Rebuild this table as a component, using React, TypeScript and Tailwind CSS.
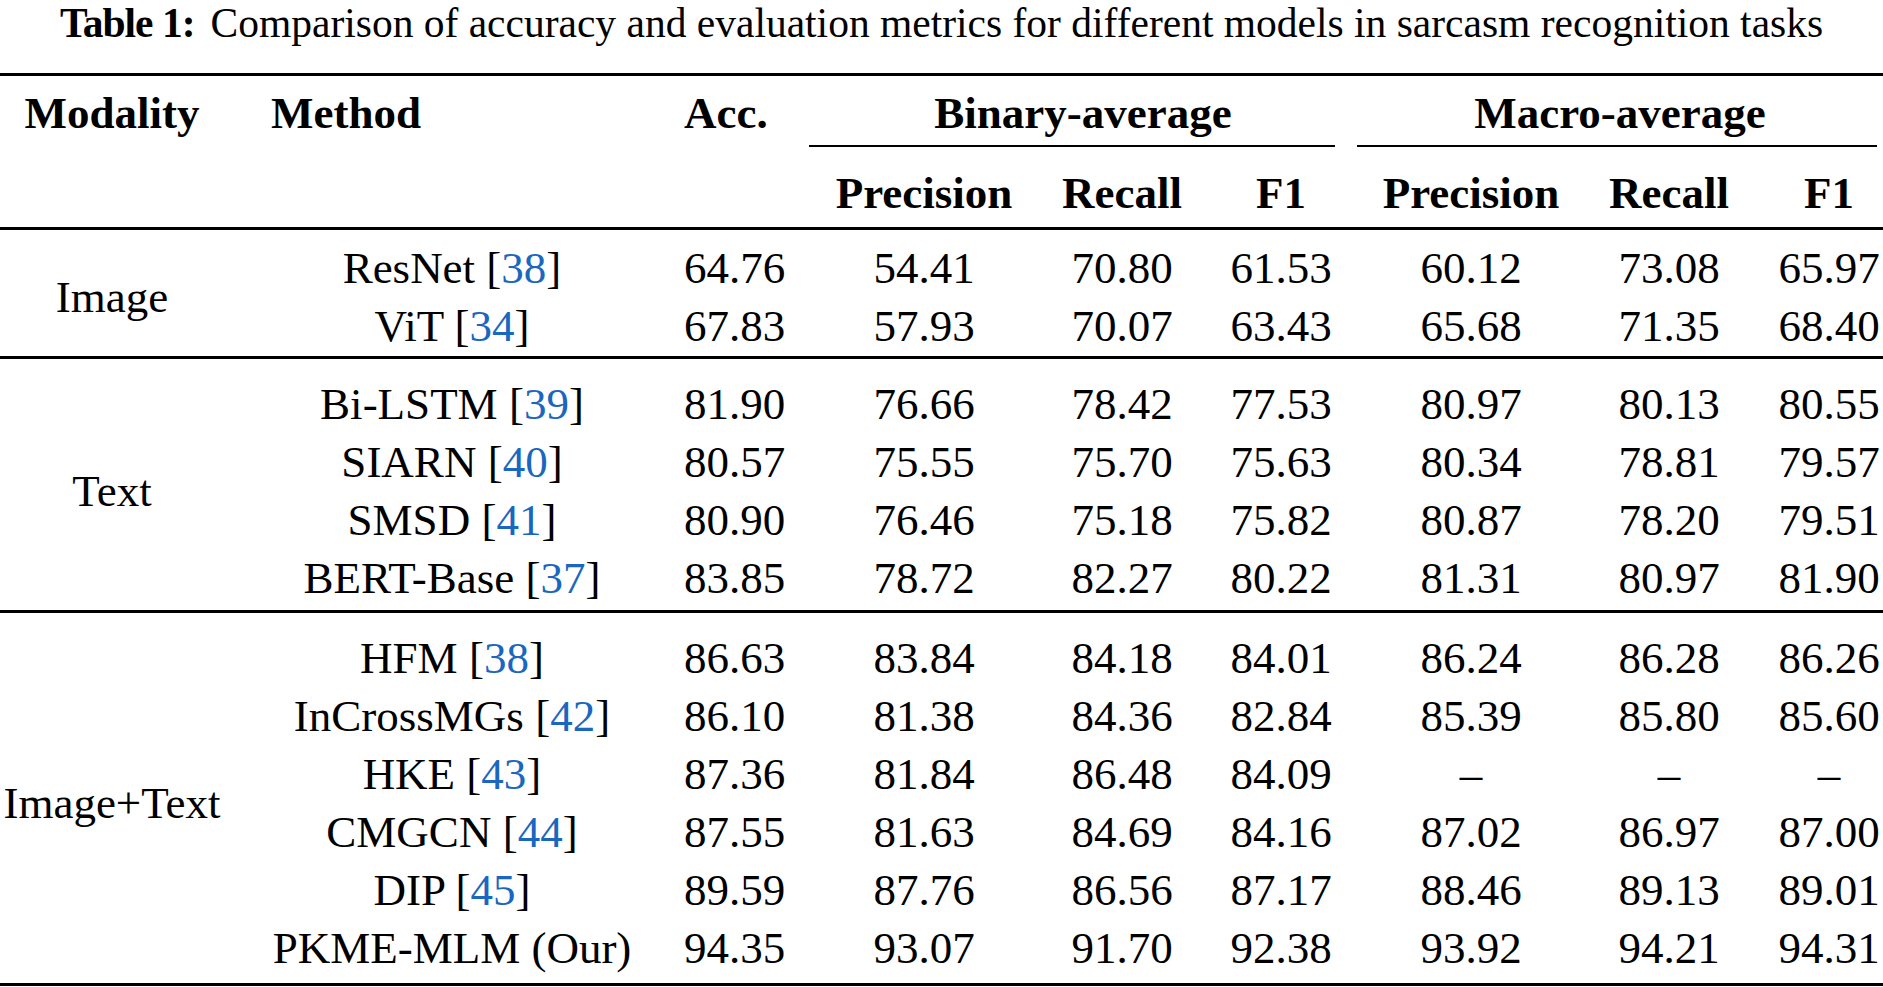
import { Fragment } from "react";

type Row = {
  name: string;
  cite: string;
  values: string[];
};

const groups: { modality: string; span: string; pad: string; rows: Row[] }[] = [
  {
    modality: "Image",
    span: "row-span-2",
    pad: "pt-[9px] pb-[1px]",
    rows: [
      { name: "ResNet", cite: "38", values: ["64.76", "54.41", "70.80", "61.53", "60.12", "73.08", "65.97"] },
      { name: "ViT", cite: "34", values: ["67.83", "57.93", "70.07", "63.43", "65.68", "71.35", "68.40"] },
    ],
  },
  {
    modality: "Text",
    span: "row-span-4",
    pad: "pt-[16px] pb-[3px]",
    rows: [
      { name: "Bi-LSTM", cite: "39", values: ["81.90", "76.66", "78.42", "77.53", "80.97", "80.13", "80.55"] },
      { name: "SIARN", cite: "40", values: ["80.57", "75.55", "75.70", "75.63", "80.34", "78.81", "79.57"] },
      { name: "SMSD", cite: "41", values: ["80.90", "76.46", "75.18", "75.82", "80.87", "78.20", "79.51"] },
      { name: "BERT-Base", cite: "37", values: ["83.85", "78.72", "82.27", "80.22", "81.31", "80.97", "81.90"] },
    ],
  },
  {
    modality: "Image+Text",
    span: "row-span-6",
    pad: "pt-[16px] pb-[6px]",
    rows: [
      { name: "HFM", cite: "38", values: ["86.63", "83.84", "84.18", "84.01", "86.24", "86.28", "86.26"] },
      { name: "InCrossMGs", cite: "42", values: ["86.10", "81.38", "84.36", "82.84", "85.39", "85.80", "85.60"] },
      { name: "HKE", cite: "43", values: ["87.36", "81.84", "86.48", "84.09", "–", "–", "–"] },
      { name: "CMGCN", cite: "44", values: ["87.55", "81.63", "84.69", "84.16", "87.02", "86.97", "87.00"] },
      { name: "DIP", cite: "45", values: ["89.59", "87.76", "86.56", "87.17", "88.46", "89.13", "89.01"] },
      { name: "PKME-MLM (Our)", cite: "", values: ["94.35", "93.07", "91.70", "92.38", "93.92", "94.21", "94.31"] },
    ],
  },
];

const grid = "grid grid-cols-[224px_456px_129px_230px_166px_152px_228px_168px_130px]";

// column alignment for the seven numeric columns
const valueCls = [
  "pl-[4px] text-left",
  "text-center",
  "text-center",
  "text-center",
  "text-center",
  "text-center",
  "pl-[22px] text-center",
];

function Rule() {
  return <div className="h-[3px] w-full bg-black" />;
}

export default function App() {
  return (
    <div className="h-[987px] w-[1883px] overflow-hidden bg-white font-['Liberation_Serif',serif] text-black">
      <div className="h-[73px] whitespace-nowrap text-center text-[41.5px] leading-[47px]">
        <span className="font-bold tracking-[-1px]">Table 1:</span>
        <span className="ml-[16px]">
          Comparison of accuracy and evaluation metrics for different models in sarcasm recognition tasks
        </span>
      </div>

      <Rule />

      {/* header */}
      <div className={`${grid} pt-[12px] pb-[7px] text-[45px] font-bold leading-[50px]`}>
        <div className="text-center">Modality</div>
        <div className="pl-[47px] text-left">Method</div>
        <div className="pl-[4px] text-left">Acc.</div>
        <div className="col-span-3 text-center">Binary-average</div>
        <div className="col-span-3 text-center">Macro-average</div>
      </div>
      <div className={grid}>
        <div className="col-span-3 col-start-4 mr-[22px] h-[2px] bg-black" />
        <div className="col-span-3 col-start-7 mr-[6px] h-[2px] bg-black" />
      </div>
      <div className={`${grid} pt-[21px] pb-[9px] text-[45px] font-bold leading-[50px]`}>
        <div className="col-start-4 text-center">Precision</div>
        <div className="text-center">Recall</div>
        <div className="text-center">F1</div>
        <div className="text-center">Precision</div>
        <div className="text-center">Recall</div>
        <div className="pl-[22px] text-center">F1</div>
      </div>

      <Rule />

      {groups.map((g) => (
        <Fragment key={g.modality}>
          <div className={`${grid} ${g.pad} text-[45px] leading-[58px]`}>
            <div className={`${g.span} flex items-center justify-center`}>{g.modality}</div>
            {g.rows.map((r) => (
              <Fragment key={r.name}>
                <div className="text-center">
                  {r.name}
                  {r.cite && (
                    <>
                      {" "}[<span className="text-[#1a67c0]">{r.cite}</span>]
                    </>
                  )}
                </div>
                {r.values.map((v, i) => (
                  <div key={i} className={valueCls[i]}>
                    {v}
                  </div>
                ))}
              </Fragment>
            ))}
          </div>
          <Rule />
        </Fragment>
      ))}
    </div>
  );
}
